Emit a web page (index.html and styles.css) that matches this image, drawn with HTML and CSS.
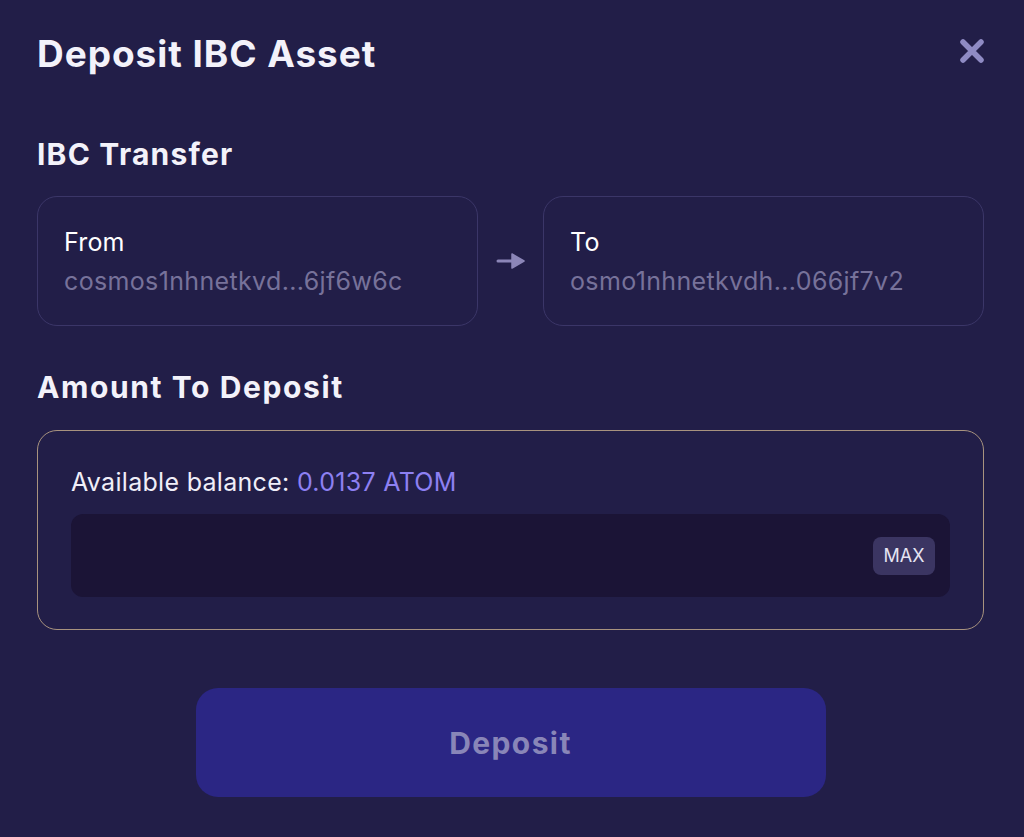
FILE: index.html
```html
<!DOCTYPE html>
<html lang="en">
<head>
<meta charset="utf-8">
<title>Deposit IBC Asset</title>
<link rel="stylesheet" href="styles.css">
</head>
<body>
<div class="modal">
  <div class="header">
    <h1 class="title">Deposit IBC Asset</h1>
    <button class="close" aria-label="Close">
      <svg width="28" height="28" viewBox="0 0 28 28"><path d="M5 5 L23 23 M23 5 L5 23" stroke="#8f8bc4" stroke-width="5.5" stroke-linecap="round" fill="none"/></svg>
    </button>
  </div>

  <h2 class="section-title transfer-title">IBC Transfer</h2>
  <div class="transfer">
    <div class="addr-box">
      <div class="addr-label">From</div>
      <div class="addr-value">cosmos1nhnetkvd...6jf6w6c</div>
    </div>
    <div class="arrow">
      <svg width="30" height="18" viewBox="0 0 30 18"><path d="M2 9 H18" stroke="#8c86b8" stroke-width="3" stroke-linecap="round"/><path d="M16 2 L28 9 L16 16 Z" fill="#8c86b8" stroke="#8c86b8" stroke-width="1.5" stroke-linejoin="round"/></svg>
    </div>
    <div class="addr-box">
      <div class="addr-label">To</div>
      <div class="addr-value">osmo1nhnetkvdh...066jf7v2</div>
    </div>
  </div>

  <h2 class="section-title amount-title">Amount To Deposit</h2>
  <div class="amount-box">
    <div class="balance">Available balance: <span class="balance-value">0.0137 ATOM</span></div>
    <div class="input-row">
      <input class="amount-input" type="text" aria-label="Amount">
      <button class="max-btn">MAX</button>
    </div>
  </div>

  <div class="actions">
    <button class="deposit-btn">Deposit</button>
  </div>
</div>
</body>
</html>
```

FILE: styles.css
```css
* { box-sizing: border-box; }
html, body {
  margin: 0;
  padding: 0;
  background: #221e48;
  height: 100%;
}
body {
  font-family: Inter, "Liberation Sans", sans-serif;
  color: #ffffff;
}
.modal {
  padding: 32px 40px 0 37px;
}
.header {
  display: flex;
  justify-content: space-between;
  align-items: center;
}
.title {
  margin: 0;
  font-family: Inter, "Liberation Sans", sans-serif;
  font-weight: 700;
  font-size: 37px;
  line-height: 44px;
  letter-spacing: 0.95px;
  color: #f3f2fa;
}
.close {
  background: none;
  border: 0;
  padding: 0;
  margin-right: -2px;
  margin-top: -6px;
  width: 28px;
  height: 28px;
  display: flex;
  cursor: pointer;
}
.section-title {
  margin: 0;
  font-weight: 700;
  font-size: 30px;
  line-height: 36px;
  color: #f3f2fa;
}
.transfer-title { margin-top: 60px; letter-spacing: 1.2px; }
.amount-title { margin-top: 43px; letter-spacing: 1.6px; }
.transfer {
  margin-top: 24px;
  display: grid;
  grid-template-columns: 1fr 65px 1fr;
  align-items: stretch;
}
.addr-box {
  border: 1px solid #3b3668;
  border-radius: 20px;
  padding: 29px 26px 26px;
  height: 130px;
}
.addr-label {
  font-size: 25px;
  line-height: 32px;
  letter-spacing: 0.2px;
  color: #ffffff;
}
.addr-value {
  margin-top: 5px;
  font-size: 25px;
  line-height: 36px;
  letter-spacing: 0.35px;
  color: #77729a;
}
.arrow {
  display: flex;
  align-items: center;
  justify-content: center;
  padding-left: 1px;
}
.amount-box {
  margin-top: 25px;
  border: 1px solid #a8937f;
  border-radius: 20px;
  padding: 35px 33px 32px;
}
.balance {
  font-size: 25px;
  line-height: 32px;
  letter-spacing: 0.3px;
  color: #f0eef8;
}
.balance-value { color: #8d80f2; }
.input-row {
  margin-top: 16px;
  height: 83px;
  background: #1b1436;
  border-radius: 12px;
  display: flex;
  align-items: center;
  padding: 0 15px 0 20px;
}
.amount-input {
  flex: 1;
  background: transparent;
  border: 0;
  outline: none;
  color: #fff;
  font-size: 24px;
  font-family: inherit;
}
.max-btn {
  width: 62px;
  height: 38px;
  background: #3b3562;
  border: 0;
  border-radius: 8px;
  color: #e6e4f2;
  font-family: Inter, "Liberation Sans", sans-serif;
  font-size: 18px;
  padding: 0;
}
.actions {
  margin-top: 58px;
  display: flex;
  justify-content: center;
}
.deposit-btn {
  width: 630px;
  height: 109px;
  background: #2b2684;
  border: 0;
  border-radius: 22px;
  color: #8986b8;
  font-family: Inter, "Liberation Sans", sans-serif;
  font-weight: 700;
  font-size: 30px;
  letter-spacing: 1.4px;
}
```
